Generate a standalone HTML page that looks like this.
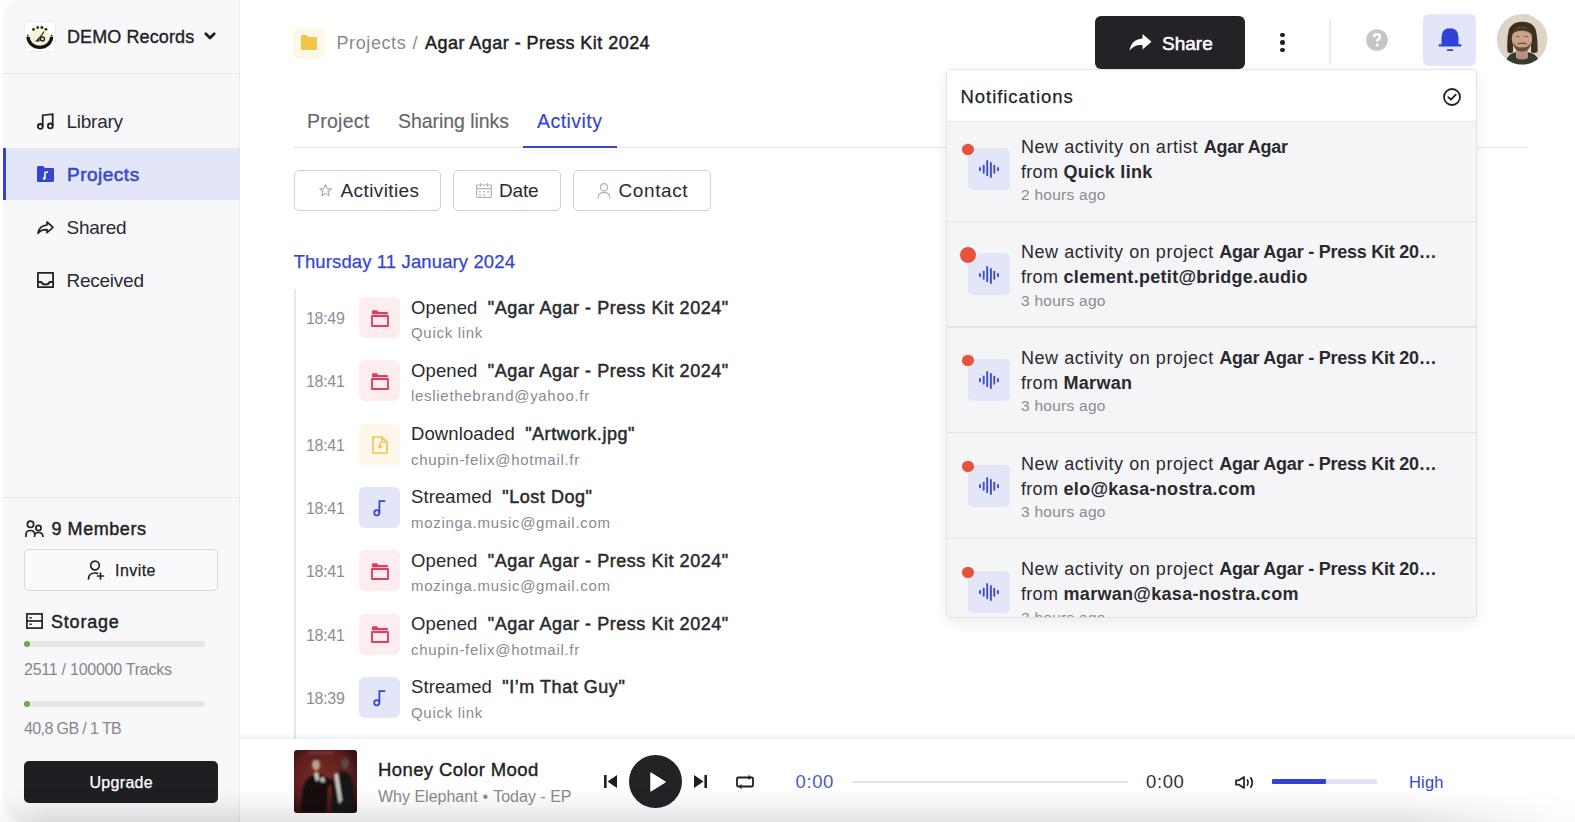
<!DOCTYPE html>
<html><head><meta charset="utf-8">
<style>
*{margin:0;padding:0;box-sizing:border-box}
html,body{width:1575px;height:822px;overflow:hidden;background:#fff;font-family:"Liberation Sans",sans-serif;color:#222}
.t{position:absolute;white-space:nowrap;line-height:1}
.b{position:absolute}
svg{position:absolute;overflow:visible}
.bold{font-weight:bold}
.med{-webkit-text-stroke:0.25px currentColor}
.lt{-webkit-text-stroke:0.15px currentColor}
</style></head><body>
<!-- SIDEBAR -->
<div class="b" style="left:3px;top:0;width:237px;height:822px;background:#f8f8fb;border-right:1px solid #ebebef;border-radius:18px 0 0 20px"></div>
<!-- logo -->
<div class="b" style="left:24px;top:21px;width:31.5px;height:31px;background:#fff;border:1px solid #eeeef2;border-radius:1px"></div>
<svg style="left:24px;top:21px" width="31" height="31" viewBox="0 0 31 31">
  <circle cx="15.8" cy="14.8" r="10.3" fill="#f6f5d6"/>
  <path d="M4 15.8 A11.8 10.6 0 0 0 27.6 15.8" fill="none" stroke="#141414" stroke-width="3.3"/>
  
  <g fill="#1a1a1a"><rect x="8.3" y="7.2" width="2.4" height="2.4" transform="rotate(-30 9.5 8.4)"/><rect x="12.5" y="5.3" width="2.3" height="2.4"/><rect x="16.6" y="5.3" width="2.6" height="2.4"/><circle cx="22" cy="8.2" r="1.3"/></g>
  <circle cx="3.8" cy="14.5" r="0.9" fill="#333"/><circle cx="27.6" cy="14.5" r="0.9" fill="#333"/>
  <path d="M13 19.5 L17.5 14.5 L20 10.5" fill="none" stroke="#222" stroke-width="1.2"/>
  <circle cx="18.5" cy="18" r="2" fill="none" stroke="#222" stroke-width="1.4"/>
  <path d="M10.5 20.5 L15.5 17.5 L15.5 20.5Z" fill="#222"/>
</svg>
<div class="t" style="left:67px;top:27.5px;font-size:18px;color:#1f1f23;letter-spacing:0.1px;-webkit-text-stroke:0.35px #1f1f23">DEMO Records</div>
<svg style="left:204px;top:32px" width="12" height="8" viewBox="0 0 12 8"><path d="M1.8 1.8 L6 6 L10.2 1.8" fill="none" stroke="#1f1f23" stroke-width="2.8" stroke-linecap="round" stroke-linejoin="round"/></svg>
<div class="b" style="left:3px;top:72.5px;width:237px;height:1px;background:#e7e7ec"></div>

<!-- nav -->
<svg style="left:37px;top:113px" width="17" height="17" viewBox="0 0 17 17"><g fill="none" stroke="#222226" stroke-width="1.8"><circle cx="3.3" cy="13.4" r="2.4"/><circle cx="13.3" cy="12.9" r="2.4"/><path d="M5.7 13.4V2.2L15.7 1.2V12.9"/></g></svg>
<div class="t" style="left:66.5px;top:111.8px;font-size:19px;color:#2a2a2e;letter-spacing:-0.25px">Library</div>

<div class="b" style="left:3px;top:148px;width:237px;height:52px;background:#e3e5f8"></div>
<div class="b" style="left:3px;top:148px;width:3px;height:52px;background:#3446d0"></div>
<svg style="left:37px;top:166px" width="17" height="16" viewBox="0 0 17 16"><path d="M0 1.2 Q0 0 1.2 0 H6 L8 2 H15.8 Q17 2 17 3.2 V14.8 Q17 16 15.8 16 H1.2 Q0 16 0 14.8Z" fill="#3446d0"/><path d="M8 12.5 V6.5 L11 6" fill="none" stroke="#fff" stroke-width="1.6"/><circle cx="7.2" cy="12.4" r="1.4" fill="#fff"/></svg>
<div class="t" style="left:67px;top:165px;font-size:19px;color:#3749cc;letter-spacing:0.5px;-webkit-text-stroke:0.55px #3749cc">Projects</div>

<svg style="left:37px;top:221px" width="17" height="13" viewBox="0 0 17 13"><path d="M10 1 L16 6.3 L10 11.6 V8.6 C5.5 8.4 3 9.6 1 12.3 C1.8 7.6 4.6 4.4 10 4 Z" fill="none" stroke="#222226" stroke-width="1.7" stroke-linejoin="round"/></svg>
<div class="t" style="left:66.5px;top:217.5px;font-size:19px;color:#2a2a2e;letter-spacing:-0.25px">Shared</div>

<svg style="left:37px;top:272px" width="17" height="16" viewBox="0 0 17 16"><g fill="none" stroke="#222226" stroke-width="1.8" stroke-linejoin="round"><rect x="0.9" y="0.9" width="15.2" height="14.2"/><path d="M1 10 H4.5 Q5 12.5 8.5 12.5 Q12 12.5 12.5 10 H16"/></g></svg>
<div class="t" style="left:66.5px;top:270.5px;font-size:19px;color:#2a2a2e;letter-spacing:-0.25px">Received</div>

<div class="b" style="left:3px;top:497px;width:237px;height:1px;background:#e7e7ec"></div>
<!-- members -->
<svg style="left:25px;top:520px" width="19" height="18" viewBox="0 0 19 18"><g fill="none" stroke="#222226" stroke-width="1.7"><circle cx="5.5" cy="4.3" r="3.2"/><path d="M1 17 V14.5 Q1 10.5 5.5 10.5 Q9.5 10.5 9.5 14"/><circle cx="13.5" cy="8" r="2.6"/><path d="M9.5 17 Q9.5 12.5 13.5 12.5 Q18 12.5 18 17"/></g></svg>
<div class="t" style="left:51.5px;top:520px;font-size:18px;color:#1f1f23;letter-spacing:0.55px;-webkit-text-stroke:0.45px #1f1f23">9 Members</div>
<div class="b" style="left:24px;top:549px;width:194px;height:42px;border:1px solid #d6d6db;border-radius:5px;background:#fafafc"></div>
<svg style="left:87px;top:560px" width="18" height="20" viewBox="0 0 18 20"><g fill="none" stroke="#222226" stroke-width="1.7" stroke-linecap="round"><circle cx="8" cy="5.5" r="4.3"/><path d="M1.5 19 Q1.5 13 8 13 Q9.5 13 10.5 13.4"/><path d="M13.5 13 V19 M10.5 16 H16.5"/></g></svg>
<div class="t med" style="left:115px;top:563px;font-size:16px;color:#1f1f23;letter-spacing:0.45px">Invite</div>
<!-- storage -->
<svg style="left:26px;top:613px" width="17" height="16" viewBox="0 0 17 16"><g fill="none" stroke="#222226" stroke-width="1.7"><rect x="0.9" y="0.9" width="15.2" height="14.2"/><path d="M1 8 H16"/></g><rect x="3.5" y="4" width="2.2" height="1.6" fill="#222226"/><rect x="3.5" y="10.5" width="2.2" height="1.6" fill="#222226"/></svg>
<div class="t" style="left:51px;top:612.5px;font-size:18px;color:#1f1f23;letter-spacing:0.8px;-webkit-text-stroke:0.45px #1f1f23">Storage</div>
<div class="b" style="left:24px;top:641px;width:181px;height:6px;background:#e6e6ea;border-radius:3px"></div>
<div class="b" style="left:24px;top:641px;width:6px;height:6px;background:#69ae45;border-radius:3px"></div>
<div class="t" style="left:24px;top:661.5px;font-size:16px;color:#86868c;letter-spacing:-0.25px">2511 / 100000 Tracks</div>
<div class="b" style="left:24px;top:701px;width:181px;height:6px;background:#e6e6ea;border-radius:3px"></div>
<div class="b" style="left:24px;top:701px;width:6px;height:6px;background:#69ae45;border-radius:3px"></div>
<div class="t" style="left:24px;top:721px;font-size:16px;color:#86868c;letter-spacing:-0.6px">40,8 GB / 1 TB</div>
<div class="b" style="left:24px;top:761px;width:194px;height:42px;background:#1f1f23;border-radius:5px"></div>
<div class="t med" style="left:89.5px;top:775px;font-size:16px;color:#fff;letter-spacing:0.3px">Upgrade</div>

<!-- HEADER -->
<div class="b" style="left:293px;top:27px;width:32px;height:32px;background:#fef8e9;border-radius:6px"></div>
<svg style="left:301px;top:35px" width="16" height="15" viewBox="0 0 16 15"><path d="M0 1 Q0 0 1 0 H5.5 L7.3 2 H15 Q16 2 16 3 V14 Q16 15 15 15 H1 Q0 15 0 14Z" fill="#f4c34a"/></svg>
<div class="t" style="left:336.5px;top:34px;font-size:18px;color:#8a8a90;letter-spacing:0.6px">Projects</div>
<div class="t" style="left:412.5px;top:34px;font-size:18px;color:#8a8a90">/</div>
<div class="t" style="left:425px;top:34px;font-size:18px;color:#1f1f23;letter-spacing:0.46px;-webkit-text-stroke:0.5px #1f1f23">Agar Agar - Press Kit 2024</div>

<div class="b" style="left:1095px;top:16px;width:150px;height:53px;background:#232327;border-radius:6px"></div>
<svg style="left:1129px;top:34px" width="23" height="17" viewBox="0 0 23 17"><path d="M13.5 0 L22.5 7.8 L13.5 15.6 V11 C7.5 10.8 3.5 12.5 0.5 16.8 C1.5 10 5.5 5.2 13.5 4.6 Z" fill="#fff"/></svg>
<div class="t" style="left:1162px;top:33.5px;font-size:19px;color:#fff;letter-spacing:0px;-webkit-text-stroke:0.5px #fff">Share</div>
<div class="b" style="left:1280px;top:32.5px;width:4.5px;height:4.5px;border-radius:50%;background:#1f1f23"></div>
<div class="b" style="left:1280px;top:40px;width:4.5px;height:4.5px;border-radius:50%;background:#1f1f23"></div>
<div class="b" style="left:1280px;top:47.5px;width:4.5px;height:4.5px;border-radius:50%;background:#1f1f23"></div>
<div class="b" style="left:1329px;top:20px;width:1.5px;height:44px;background:#ececef"></div>
<svg style="left:1366px;top:28.5px" width="22" height="22" viewBox="0 0 22 22"><circle cx="11" cy="11" r="10.8" fill="#c6c6c8"/><path d="M8 8.3 Q8 5.2 11 5.2 Q14 5.2 14 8 Q14 9.6 12.3 10.4 Q11.2 11 11.2 12.6" fill="none" stroke="#fff" stroke-width="2.4"/><circle cx="11.2" cy="15.9" r="1.4" fill="#fff"/></svg>
<div class="b" style="left:1423px;top:13.5px;width:53px;height:52px;background:#e3e5f8;border-radius:6px"></div>
<svg style="left:1438px;top:27px" width="24" height="25" viewBox="0 0 24 25"><path d="M3.5 18 V10.5 Q3.5 1.2 12 1.2 Q20.5 1.2 20.5 10.5 V18Z" fill="#3142d6"/><rect x="0.5" y="17.3" width="23" height="2.2" rx="1" fill="#3142d6"/><rect x="8.8" y="22.2" width="6.4" height="1.8" rx="0.8" fill="#3142d6"/></svg>
<!-- avatar -->
<svg style="left:1496px;top:14px" width="53" height="53" viewBox="0 0 53 53">
  <defs><clipPath id="av"><circle cx="26.1" cy="25.3" r="25.3"/></clipPath><filter id="avb"><feGaussianBlur stdDeviation="0.7"/></filter></defs>
  <g clip-path="url(#av)">
    <rect width="53" height="53" fill="#ddd4c5"/>
    <g filter="url(#avb)">
    <path d="M8 53 Q10 41 18 38.5 L34 38.5 Q43 41 45 53Z" fill="#353b30"/>
    <path d="M20 36 L32 36 L32 44 Q26 47 20 44Z" fill="#b89078"/>
    <path d="M11.5 38 Q10.5 24 13 15 Q17 7.5 26 7.7 Q36 7.5 39.5 15 Q42 24 41.5 38 Q38 40 35 38 L35 22 Q26 17 17 22 L17 38 Q14 40 11.5 38Z" fill="#3e2e24"/>
    <ellipse cx="26" cy="25" rx="10.2" ry="12.3" fill="#cba28a"/>
    <path d="M17 28 Q17.5 37.5 26 37.5 Q34.5 37.5 35 28 Q33 33.5 26 33.5 Q19 33.5 17 28Z" fill="#54402f" opacity="0.85"/>
    <path d="M16.5 20 Q18 13 26 13 Q34 13 35.5 20 Q31 16.5 26 16.8 Q20 16.5 16.5 20Z" fill="#4a382c"/>
    <path d="M21.5 29.8 Q26 28.3 30.5 29.8" fill="none" stroke="#6a4838" stroke-width="1.3"/>
    <path d="M20 22.5 H23.5 M28.5 22.5 H32" stroke="#7a5a48" stroke-width="1"/>
    </g>
  </g>
</svg>

<!-- TABS -->
<div class="t lt" style="left:307px;top:112px;font-size:19.5px;color:#66666c;letter-spacing:0.25px">Project</div>
<div class="t lt" style="left:398px;top:112px;font-size:19.5px;color:#66666c;letter-spacing:-0.05px">Sharing links</div>
<div class="t lt" style="left:537px;top:112px;font-size:19.5px;color:#3446d0;letter-spacing:0.45px">Activity</div>
<div class="b" style="left:293px;top:146.5px;width:1234px;height:1px;background:#e4e4e9"></div>
<div class="b" style="left:523px;top:146px;width:94px;height:2px;background:#3446d0"></div>

<!-- FILTERS -->
<div class="b" style="left:294px;top:169.5px;width:147px;height:41px;border:1px solid #cfcfd4;border-radius:5px"></div>
<svg style="left:319px;top:184px" width="13" height="13" viewBox="0 0 13 13"><path d="M6.5 0.8 L8.2 4.6 L12.2 4.9 L9.1 7.5 L10.1 11.6 L6.5 9.4 L2.9 11.6 L3.9 7.5 L0.8 4.9 L4.8 4.6Z" fill="none" stroke="#a9a9ae" stroke-width="1.1" stroke-linejoin="round"/></svg>
<div class="t" style="left:340.5px;top:181px;font-size:19px;color:#2a2a2e;letter-spacing:0.4px">Activities</div>
<div class="b" style="left:453px;top:169.5px;width:108px;height:41px;border:1px solid #cfcfd4;border-radius:5px"></div>
<svg style="left:476px;top:183px" width="16" height="15" viewBox="0 0 16 15"><g fill="none" stroke="#b5b5ba" stroke-width="1.2"><rect x="0.6" y="2" width="14.8" height="12.4" rx="1"/><path d="M0.6 5.6 H15.4 M4.5 0 V3.5 M11.5 0 V3.5"/></g><g fill="#b5b5ba"><rect x="3.2" y="8" width="1.6" height="1.4"/><rect x="7.2" y="8" width="1.6" height="1.4"/><rect x="11.2" y="8" width="1.6" height="1.4"/><rect x="3.2" y="11" width="1.6" height="1.4"/><rect x="7.2" y="11" width="1.6" height="1.4"/></g></svg>
<div class="t" style="left:499px;top:181px;font-size:19px;color:#2a2a2e;letter-spacing:-0.2px">Date</div>
<div class="b" style="left:572.5px;top:169.5px;width:138px;height:41px;border:1px solid #cfcfd4;border-radius:5px"></div>
<svg style="left:597px;top:183px" width="14" height="16" viewBox="0 0 14 16"><g fill="none" stroke="#b5b5ba" stroke-width="1.3"><circle cx="7" cy="4.3" r="3.6"/><path d="M1 15.5 Q1 9.5 7 9.5 Q13 9.5 13 15.5"/></g></svg>
<div class="t" style="left:618.5px;top:181px;font-size:19px;color:#2a2a2e;letter-spacing:0.6px">Contact</div>

<div class="t med" style="left:293.5px;top:252.5px;font-size:18.5px;color:#3446d0;letter-spacing:0.12px">Thursday 11 January 2024</div>
<div class="b" style="left:294px;top:289px;width:1.5px;height:450px;background:#e6e6ea"></div>

<div class="t" style="left:306px;top:311.0px;font-size:16px;color:#8e8e94;letter-spacing:-0.3px">18:49</div>
<div class="b" style="left:359px;top:297.0px;width:41px;height:41px;background:#fdedf0;border-radius:6px"></div>
<svg style="left:370.5px;top:309.5px" width="18" height="17" viewBox="0 0 18 17"><g fill="none" stroke="#de3f5d" stroke-width="1.9" stroke-linejoin="round"><rect x="1" y="6" width="16" height="10"/></g><path d="M1 1.2 Q1 0.3 1.9 0.3 H6 L7.5 2 H16 Q17 2 17 3 V4.2 H1Z" fill="#de3f5d"/></svg>
<div class="t" style="left:411px;top:298.5px;font-size:18.5px;color:#2a2a2e"><span style="letter-spacing:0.1px">Opened</span>&nbsp; <span style="font-size:18px;letter-spacing:0.54px;-webkit-text-stroke:0.5px #2a2a2e">"Agar Agar - Press Kit 2024"</span></div>
<div class="t" style="left:411px;top:325.0px;font-size:15px;color:#8a8a90;letter-spacing:0.7px">Quick link</div>
<div class="t" style="left:306px;top:374.3px;font-size:16px;color:#8e8e94;letter-spacing:-0.3px">18:41</div>
<div class="b" style="left:359px;top:360.3px;width:41px;height:41px;background:#fdedf0;border-radius:6px"></div>
<svg style="left:370.5px;top:372.8px" width="18" height="17" viewBox="0 0 18 17"><g fill="none" stroke="#de3f5d" stroke-width="1.9" stroke-linejoin="round"><rect x="1" y="6" width="16" height="10"/></g><path d="M1 1.2 Q1 0.3 1.9 0.3 H6 L7.5 2 H16 Q17 2 17 3 V4.2 H1Z" fill="#de3f5d"/></svg>
<div class="t" style="left:411px;top:361.8px;font-size:18.5px;color:#2a2a2e"><span style="letter-spacing:0.1px">Opened</span>&nbsp; <span style="font-size:18px;letter-spacing:0.54px;-webkit-text-stroke:0.5px #2a2a2e">"Agar Agar - Press Kit 2024"</span></div>
<div class="t" style="left:411px;top:388.3px;font-size:15px;color:#8a8a90;letter-spacing:0.7px">lesliethebrand@yahoo.fr</div>
<div class="t" style="left:306px;top:437.6px;font-size:16px;color:#8e8e94;letter-spacing:-0.3px">18:41</div>
<div class="b" style="left:359px;top:423.6px;width:41px;height:41px;background:#fef8ea;border-radius:6px"></div>
<svg style="left:371.5px;top:435.6px" width="16" height="18" viewBox="0 0 16 18"><g fill="none" stroke="#f1c34c" stroke-width="1.7" stroke-linejoin="round"><path d="M1 1 H10 L15 6 V17 H1Z"/><path d="M10 1 V6 H15"/></g><path d="M8 6.5 V11" stroke="#f1c34c" stroke-width="1.7"/><path d="M5.2 10 L8 13 L10.8 10Z" fill="#f1c34c"/></svg>
<div class="t" style="left:411px;top:425.1px;font-size:18.5px;color:#2a2a2e"><span style="letter-spacing:0.1px">Downloaded</span>&nbsp; <span style="font-size:18px;letter-spacing:0.54px;-webkit-text-stroke:0.5px #2a2a2e">"Artwork.jpg"</span></div>
<div class="t" style="left:411px;top:451.6px;font-size:15px;color:#8a8a90;letter-spacing:0.7px">chupin-felix@hotmail.fr</div>
<div class="t" style="left:306px;top:500.9px;font-size:16px;color:#8e8e94;letter-spacing:-0.3px">18:41</div>
<div class="b" style="left:359px;top:486.9px;width:41px;height:41px;background:#e3e5f8;border-radius:6px"></div>
<svg style="left:373px;top:499.9px" width="13" height="17" viewBox="0 0 13 17"><g fill="none" stroke="#3446c8" stroke-width="1.75"><circle cx="3.8" cy="12.8" r="2.6"/><path d="M6.4 12.8 V1.2 H12.3"/></g></svg>
<div class="t" style="left:411px;top:488.4px;font-size:18.5px;color:#2a2a2e"><span style="letter-spacing:0.1px">Streamed</span>&nbsp; <span style="font-size:18px;letter-spacing:0.54px;-webkit-text-stroke:0.5px #2a2a2e">"Lost Dog"</span></div>
<div class="t" style="left:411px;top:514.9px;font-size:15px;color:#8a8a90;letter-spacing:0.7px">mozinga.music@gmail.com</div>
<div class="t" style="left:306px;top:564.2px;font-size:16px;color:#8e8e94;letter-spacing:-0.3px">18:41</div>
<div class="b" style="left:359px;top:550.2px;width:41px;height:41px;background:#fdedf0;border-radius:6px"></div>
<svg style="left:370.5px;top:562.7px" width="18" height="17" viewBox="0 0 18 17"><g fill="none" stroke="#de3f5d" stroke-width="1.9" stroke-linejoin="round"><rect x="1" y="6" width="16" height="10"/></g><path d="M1 1.2 Q1 0.3 1.9 0.3 H6 L7.5 2 H16 Q17 2 17 3 V4.2 H1Z" fill="#de3f5d"/></svg>
<div class="t" style="left:411px;top:551.7px;font-size:18.5px;color:#2a2a2e"><span style="letter-spacing:0.1px">Opened</span>&nbsp; <span style="font-size:18px;letter-spacing:0.54px;-webkit-text-stroke:0.5px #2a2a2e">"Agar Agar - Press Kit 2024"</span></div>
<div class="t" style="left:411px;top:578.2px;font-size:15px;color:#8a8a90;letter-spacing:0.7px">mozinga.music@gmail.com</div>
<div class="t" style="left:306px;top:627.5px;font-size:16px;color:#8e8e94;letter-spacing:-0.3px">18:41</div>
<div class="b" style="left:359px;top:613.5px;width:41px;height:41px;background:#fdedf0;border-radius:6px"></div>
<svg style="left:370.5px;top:626.0px" width="18" height="17" viewBox="0 0 18 17"><g fill="none" stroke="#de3f5d" stroke-width="1.9" stroke-linejoin="round"><rect x="1" y="6" width="16" height="10"/></g><path d="M1 1.2 Q1 0.3 1.9 0.3 H6 L7.5 2 H16 Q17 2 17 3 V4.2 H1Z" fill="#de3f5d"/></svg>
<div class="t" style="left:411px;top:615.0px;font-size:18.5px;color:#2a2a2e"><span style="letter-spacing:0.1px">Opened</span>&nbsp; <span style="font-size:18px;letter-spacing:0.54px;-webkit-text-stroke:0.5px #2a2a2e">"Agar Agar - Press Kit 2024"</span></div>
<div class="t" style="left:411px;top:641.5px;font-size:15px;color:#8a8a90;letter-spacing:0.7px">chupin-felix@hotmail.fr</div>
<div class="t" style="left:306px;top:690.8px;font-size:16px;color:#8e8e94;letter-spacing:-0.3px">18:39</div>
<div class="b" style="left:359px;top:676.8px;width:41px;height:41px;background:#e3e5f8;border-radius:6px"></div>
<svg style="left:373px;top:689.8px" width="13" height="17" viewBox="0 0 13 17"><g fill="none" stroke="#3446c8" stroke-width="1.75"><circle cx="3.8" cy="12.8" r="2.6"/><path d="M6.4 12.8 V1.2 H12.3"/></g></svg>
<div class="t" style="left:411px;top:678.3px;font-size:18.5px;color:#2a2a2e"><span style="letter-spacing:0.1px">Streamed</span>&nbsp; <span style="font-size:18px;letter-spacing:0.54px;-webkit-text-stroke:0.5px #2a2a2e">"I’m That Guy"</span></div>
<div class="t" style="left:411px;top:704.8px;font-size:15px;color:#8a8a90;letter-spacing:0.7px">Quick link</div>

<!-- PLAYER -->
<div class="b" style="left:240px;top:732px;width:1335px;height:7px;background:linear-gradient(rgba(0,0,0,0),rgba(0,0,0,0.055))"></div>
<div class="b" style="left:240px;top:739px;width:1335px;height:83px;background:#fff"></div>
<svg style="left:294px;top:750px" width="63" height="63" viewBox="0 0 63 63">
  <defs>
    <radialGradient id="al" cx="0.45" cy="0.45" r="0.75"><stop offset="0" stop-color="#7a2e26"/><stop offset="0.6" stop-color="#5e1e1e"/><stop offset="1" stop-color="#200a0a"/></radialGradient>
    <filter id="bl"><feGaussianBlur stdDeviation="0.9"/></filter>
    <clipPath id="alc"><rect width="63" height="63" rx="3"/></clipPath>
  </defs>
  <g clip-path="url(#alc)">
  <rect width="63" height="63" fill="url(#al)"/>
  <g filter="url(#bl)">
    <path d="M6 63 L9 38 Q12 27 20 25 L26 24 Q32 26 36 30 L42 29 L43 33 L34 36 L33 63Z" fill="#181010"/>
    <ellipse cx="22" cy="15" rx="4" ry="5.5" fill="#b9a08c"/>
    <path d="M17.5 13 Q18 8 22 8 Q26 8 26.5 12 L25 10 Q22 9.5 19 11Z" fill="#3a2a20"/>
    <path d="M20 23 L24 22 L25 30 L22 31Z" fill="#d8cfc5"/>
    <path d="M26 28 L30 27 L31 32 L27 32Z" fill="#c8c0b8"/>
    <path d="M37 63 L38 30 Q40 22 48 21 Q58 22 59 34 L61 63Z" fill="#141414"/>
    <ellipse cx="51" cy="13.5" rx="4" ry="5.5" fill="#5a4a42"/>
    <path d="M40 24 L44 23 L48 50 L45 54Z" fill="#cfc8c0"/>
    <path d="M14 3 H40" stroke="#b08070" stroke-width="1" opacity="0.6"/>
  </g>
  </g>
</svg>
<div class="t" style="left:378px;top:760.5px;font-size:18.5px;color:#1f1f23;letter-spacing:0.4px;-webkit-text-stroke:0.4px #1f1f23">Honey Color Mood</div>
<div class="t" style="left:378px;top:788.5px;font-size:16px;color:#8a8a90;letter-spacing:0px">Why Elephant<span style="margin:0 5px 0 5px">•</span>Today - EP</div>
<svg style="left:604px;top:775px" width="13" height="13" viewBox="0 0 13 13"><rect x="0" y="0" width="2.6" height="13" fill="#1f1f23"/><path d="M13 0 V13 L3.5 6.5Z" fill="#1f1f23"/></svg>
<div class="b" style="left:629px;top:755px;width:53px;height:53px;border-radius:50%;background:#232327"></div>
<svg style="left:649.5px;top:771.5px" width="16" height="20" viewBox="0 0 16 20"><path d="M0.8 0.8 L15.5 10 L0.8 19.2Z" fill="#fff" stroke="#fff" stroke-width="1" stroke-linejoin="round"/></svg>
<svg style="left:694px;top:775px" width="13" height="13" viewBox="0 0 13 13"><rect x="10.4" y="0" width="2.6" height="13" fill="#1f1f23"/><path d="M0 0 V13 L9.5 6.5Z" fill="#1f1f23"/></svg>
<svg style="left:736px;top:773px" width="18" height="18" viewBox="0 0 18 18"><g fill="none" stroke="#1f1f23" stroke-width="1.8" stroke-linejoin="round"><path d="M4 13.5 H2.2 Q1 13.5 1 12.3 V5.7 Q1 4.5 2.2 4.5 H14"/><path d="M14 4.5 H15.8 Q17 4.5 17 5.7 V12.3 Q17 13.5 15.8 13.5 H4"/></g><path d="M12.5 1.5 L15 4.5 L12.5 7.2Z" fill="#1f1f23"/><path d="M5.5 10.8 L3 13.5 L5.5 16.5Z" fill="#1f1f23"/></svg>
<div class="t" style="left:795.5px;top:773px;font-size:18.5px;color:#4a5cc8;letter-spacing:0.6px">0:00</div>
<div class="b" style="left:852px;top:781px;width:276px;height:1.5px;background:#e1e3ee"></div>
<div class="t" style="left:1146px;top:773px;font-size:18.5px;color:#333337;letter-spacing:0.6px">0:00</div>
<svg style="left:1235px;top:776px" width="20" height="13" viewBox="0 0 20 13"><g fill="none" stroke="#222226" stroke-width="1.7" stroke-linejoin="round" stroke-linecap="round"><path d="M1 4.3 H4 L9 1 V12 L4 8.7 H1Z"/><path d="M12.5 4 Q13.8 6.5 12.5 9"/><path d="M15.8 1.8 Q18.6 6.5 15.8 11.2"/></g></svg>
<div class="b" style="left:1271.5px;top:779px;width:105.5px;height:5px;background:#e2e4f4;border-radius:1px"></div>
<div class="b" style="left:1271.5px;top:779px;width:54.5px;height:5px;background:#3142d6;border-radius:1px"></div>
<div class="t" style="left:1409px;top:774px;font-size:16.5px;color:#3446d0;letter-spacing:0.2px">High</div>

<div class="b" style="left:945.5px;top:69px;width:531px;height:549px;border-radius:4px;background:#f5f5f8;box-shadow:0 5px 14px rgba(0,0,0,0.08);overflow:hidden">
<div class="b" style="left:0;top:0;width:530px;height:53px;background:#fff;border-bottom:1.5px solid #e6e6ea"></div>
<div class="t med" style="left:15.0px;top:18.5px;font-size:18.5px;color:#1f1f23;letter-spacing:0.95px">Notifications</div>
<svg style="left:497.0px;top:18.5px" width="18" height="18" viewBox="0 0 18 18"><circle cx="9" cy="9" r="8" fill="none" stroke="#222226" stroke-width="1.8"/><path d="M5.3 9.2 L7.9 11.7 L12.8 6.6" fill="none" stroke="#222226" stroke-width="1.8" stroke-linejoin="round" stroke-linecap="round"/></svg>
<div class="b" style="left:0.5px;top:151.9px;width:530px;height:1.5px;background:#e4e4e8"></div>
<div class="b" style="left:0.5px;top:257.0px;width:530px;height:1.5px;background:#e4e4e8"></div>
<div class="b" style="left:0.5px;top:362.5px;width:530px;height:1.5px;background:#e4e4e8"></div>
<div class="b" style="left:0.5px;top:468.5px;width:530px;height:1.5px;background:#e4e4e8"></div>
<div class="b" style="left:22.5px;top:78.8px;width:41.5px;height:42px;background:#e3e5f8;border-radius:5px"></div>
<svg style="left:33.4px;top:91.0px" width="20" height="18" viewBox="0 0 20 18"><g stroke="#3d4ec8" stroke-width="1.9" stroke-linecap="round"><path d="M1 8 V10.2"/><path d="M4.7 5.6 V12.8"/><path d="M8.2 1 V15.2"/><path d="M11.9 3 V17"/><path d="M15.3 5.6 V12.8"/><path d="M19 8 V10.2"/></g></svg>
<div class="b" style="left:15.8px;top:73.8px;width:13.5px;height:13.5px;border-radius:50%;background:#e5533d;border:1.5px solid #f5f5f8"></div>
<div class="t" style="left:75.5px;top:68.7px;font-size:18px;color:#2a2a2e"><span style="letter-spacing:0.55px">New activity on artist </span><span class="bold" style="letter-spacing:-0.25px">Agar Agar</span></div>
<div class="t" style="left:75.5px;top:93.5px;font-size:18px;color:#2a2a2e"><span style="letter-spacing:0.3px">from </span><span class="bold" style="letter-spacing:0.3px">Quick link</span></div>
<div class="t" style="left:75.5px;top:118.2px;font-size:15.5px;color:#8a8a90;letter-spacing:0.25px">2 hours ago</div>
<div class="b" style="left:22.5px;top:184.3px;width:41.5px;height:42px;background:#e3e5f8;border-radius:5px"></div>
<svg style="left:33.4px;top:196.5px" width="20" height="18" viewBox="0 0 20 18"><g stroke="#3d4ec8" stroke-width="1.9" stroke-linecap="round"><path d="M1 8 V10.2"/><path d="M4.7 5.6 V12.8"/><path d="M8.2 1 V15.2"/><path d="M11.9 3 V17"/><path d="M15.3 5.6 V12.8"/><path d="M19 8 V10.2"/></g></svg>
<div class="b" style="left:13.5px;top:177.0px;width:18px;height:18px;border-radius:50%;background:#e5533d;border:1.5px solid #f5f5f8"></div>
<div class="t" style="left:75.5px;top:174.2px;font-size:18px;color:#2a2a2e"><span style="letter-spacing:0.55px">New activity on project </span><span class="bold" style="letter-spacing:-0.25px">Agar Agar - Press Kit 20…</span></div>
<div class="t" style="left:75.5px;top:199.0px;font-size:18px;color:#2a2a2e"><span style="letter-spacing:0.3px">from </span><span class="bold" style="letter-spacing:0.3px">clement.petit@bridge.audio</span></div>
<div class="t" style="left:75.5px;top:223.7px;font-size:15.5px;color:#8a8a90;letter-spacing:0.25px">3 hours ago</div>
<div class="b" style="left:22.5px;top:289.9px;width:41.5px;height:42px;background:#e3e5f8;border-radius:5px"></div>
<svg style="left:33.4px;top:302.1px" width="20" height="18" viewBox="0 0 20 18"><g stroke="#3d4ec8" stroke-width="1.9" stroke-linecap="round"><path d="M1 8 V10.2"/><path d="M4.7 5.6 V12.8"/><path d="M8.2 1 V15.2"/><path d="M11.9 3 V17"/><path d="M15.3 5.6 V12.8"/><path d="M19 8 V10.2"/></g></svg>
<div class="b" style="left:15.8px;top:284.8px;width:13.5px;height:13.5px;border-radius:50%;background:#e5533d;border:1.5px solid #f5f5f8"></div>
<div class="t" style="left:75.5px;top:279.8px;font-size:18px;color:#2a2a2e"><span style="letter-spacing:0.55px">New activity on project </span><span class="bold" style="letter-spacing:-0.25px">Agar Agar - Press Kit 20…</span></div>
<div class="t" style="left:75.5px;top:304.6px;font-size:18px;color:#2a2a2e"><span style="letter-spacing:0.3px">from </span><span class="bold" style="letter-spacing:0.3px">Marwan</span></div>
<div class="t" style="left:75.5px;top:329.3px;font-size:15.5px;color:#8a8a90;letter-spacing:0.25px">3 hours ago</div>
<div class="b" style="left:22.5px;top:395.9px;width:41.5px;height:42px;background:#e3e5f8;border-radius:5px"></div>
<svg style="left:33.4px;top:408.1px" width="20" height="18" viewBox="0 0 20 18"><g stroke="#3d4ec8" stroke-width="1.9" stroke-linecap="round"><path d="M1 8 V10.2"/><path d="M4.7 5.6 V12.8"/><path d="M8.2 1 V15.2"/><path d="M11.9 3 V17"/><path d="M15.3 5.6 V12.8"/><path d="M19 8 V10.2"/></g></svg>
<div class="b" style="left:15.8px;top:390.8px;width:13.5px;height:13.5px;border-radius:50%;background:#e5533d;border:1.5px solid #f5f5f8"></div>
<div class="t" style="left:75.5px;top:385.8px;font-size:18px;color:#2a2a2e"><span style="letter-spacing:0.55px">New activity on project </span><span class="bold" style="letter-spacing:-0.25px">Agar Agar - Press Kit 20…</span></div>
<div class="t" style="left:75.5px;top:410.6px;font-size:18px;color:#2a2a2e"><span style="letter-spacing:0.3px">from </span><span class="bold" style="letter-spacing:0.3px">elo@kasa-nostra.com</span></div>
<div class="t" style="left:75.5px;top:435.3px;font-size:15.5px;color:#8a8a90;letter-spacing:0.25px">3 hours ago</div>
<div class="b" style="left:22.5px;top:501.5px;width:41.5px;height:42px;background:#e3e5f8;border-radius:5px"></div>
<svg style="left:33.4px;top:513.7px" width="20" height="18" viewBox="0 0 20 18"><g stroke="#3d4ec8" stroke-width="1.9" stroke-linecap="round"><path d="M1 8 V10.2"/><path d="M4.7 5.6 V12.8"/><path d="M8.2 1 V15.2"/><path d="M11.9 3 V17"/><path d="M15.3 5.6 V12.8"/><path d="M19 8 V10.2"/></g></svg>
<div class="b" style="left:15.8px;top:496.5px;width:13.5px;height:13.5px;border-radius:50%;background:#e5533d;border:1.5px solid #f5f5f8"></div>
<div class="t" style="left:75.5px;top:491.4px;font-size:18px;color:#2a2a2e"><span style="letter-spacing:0.55px">New activity on project </span><span class="bold" style="letter-spacing:-0.25px">Agar Agar - Press Kit 20…</span></div>
<div class="t" style="left:75.5px;top:516.2px;font-size:18px;color:#2a2a2e"><span style="letter-spacing:0.3px">from </span><span class="bold" style="letter-spacing:0.3px">marwan@kasa-nostra.com</span></div>
<div class="t" style="left:75.5px;top:540.9px;font-size:15.5px;color:#8a8a90;letter-spacing:0.25px">3 hours ago</div>
<div class="b" style="left:0;top:0;width:531px;height:549px;border:1px solid #e2e2e7;border-radius:4px"></div>
</div>
<div class="b" style="left:0;top:788px;width:1575px;height:34px;background:linear-gradient(rgba(0,0,0,0),rgba(0,0,0,0.03) 40%,rgba(0,0,0,0.115));-webkit-mask-image:linear-gradient(to right,rgba(0,0,0,0.3) 0,#000 3%,#000 89%,rgba(0,0,0,0.1) 99%)"></div>

</body></html>
